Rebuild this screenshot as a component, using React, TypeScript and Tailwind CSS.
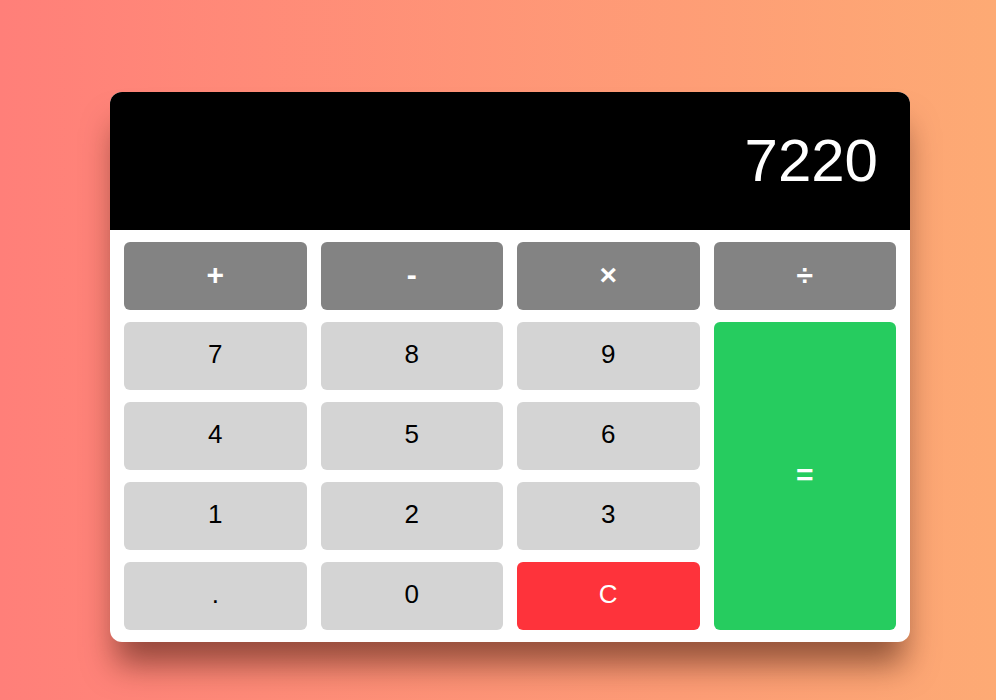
import React from 'react';

const ops = ['+', '-', '×', '÷'];

export default function App() {
  const font = { fontFamily: '"Liberation Sans", Arial, Helvetica, sans-serif' };

  return (
    <div
      className="min-h-[700px] w-full bg-gradient-to-r from-[#ff7f79] to-[#fdaa74] pt-[92px] pl-[110px]"
      style={font}
    >
      <div className="w-[800px] rounded-xl bg-white overflow-hidden shadow-[0_28px_32px_-6px_rgba(60,20,10,0.55)]">
        {/* Display */}
        <div className="h-[138px] bg-black flex items-center justify-end pr-8">
          <span className="text-white text-[60px] leading-none font-light">7220</span>
        </div>

        {/* Keys */}
        <div className="grid grid-cols-4 gap-x-[14px] gap-y-3 px-[14px] py-3 auto-rows-[68px]">
          {ops.map((op) => (
            <button
              key={op}
              className="rounded-md bg-[#838383] text-white text-[30px] font-bold flex items-center justify-center pb-1"
            >
              {op}
            </button>
          ))}

          <Key label="7" />
          <Key label="8" />
          <Key label="9" />
          <button className="row-span-4 rounded-md bg-[#26cc5f] text-white text-[30px] font-bold flex items-center justify-center pb-1">
            =
          </button>

          <Key label="4" />
          <Key label="5" />
          <Key label="6" />

          <Key label="1" />
          <Key label="2" />
          <Key label="3" />

          <Key label="." />
          <Key label="0" />
          <button className="rounded-md bg-[#fe333b] text-white text-[26px] flex items-center justify-center pb-1">
            C
          </button>
        </div>
      </div>
    </div>
  );
}

function Key({ label }: { label: string }) {
  return (
    <button className="rounded-md bg-[#d4d4d4] text-black text-[26px] flex items-center justify-center pb-1">
      {label}
    </button>
  );
}
